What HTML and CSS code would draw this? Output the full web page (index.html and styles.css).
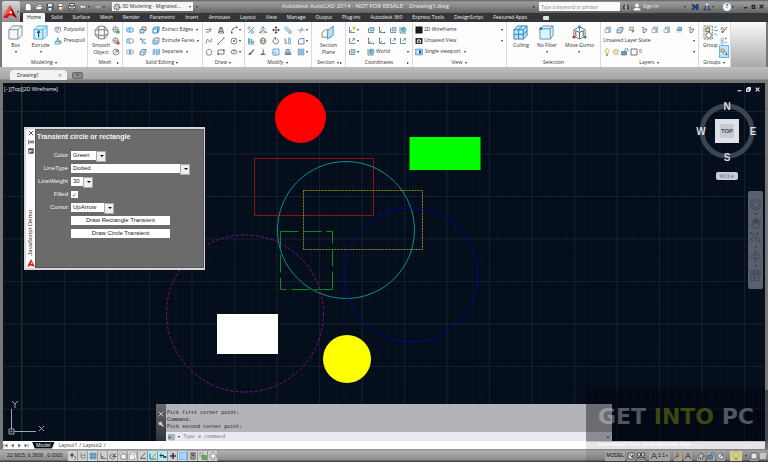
FILE: index.html
```html
<!DOCTYPE html>
<html lang="en">
<head>
  <meta charset="UTF-8"/>
  <meta name="viewport" content="width=device-width,initial-scale=1.0"/>
  <title>Autodesk AutoCAD 2014 - Drawing1.dwg</title>
  <link rel="stylesheet" href="styles.css">
</head>
<body>

<!-- Icon set -->
<svg class="icon-set" aria-hidden="true">
  <symbol id="i-box" viewBox="0 0 16 16"><path d="M1 5 5 1h10v10l-4 4H1z" fill="#f4f8fb" stroke="#7b8896"/><path d="M1 5h9.500v10M10.500 5 15 1" fill="none" stroke="#7b8896"/></symbol>
  <symbol id="i-extrude" viewBox="0 0 16 16"><path d="M1 5 5 1h10v10l-4 4H1z" fill="#c9efff" stroke="#4aa6dc"/><path d="M1 5h9.500v10M10.500 5 15 1" fill="none" stroke="#4aa6dc"/><path d="M6 13V7M4.500 8.500 6 6l1.500 2.500" stroke="#222" fill="none"/></symbol>
  <symbol id="i-polysolid" viewBox="0 0 16 16"><path d="M2 3h4v7l3 3 4-3V3h-4v5M2 3v6l5 5M6 3 9 1" fill="none" stroke="#6e7f8c" stroke-width="1.500"/></symbol>
  <symbol id="i-presspull" viewBox="0 0 16 16"><path d="M2 9h10v5H2zM5 9l2-6 3 6" fill="#d9f1fd" stroke="#2f8ec8" stroke-width="1.500"/><path d="M8 1v4M11 6l3 3v4" stroke="#555" fill="none" stroke-width="1.500"/></symbol>
  <symbol id="i-smooth" viewBox="0 0 16 16"><circle cx="8" cy="8" r="7" fill="#f6f6f6" stroke="#777"/><path d="M5 5h6v6H5zM1 6l4-1V1.500M11 1.500V5l4 1M1 10l4 1v4M15 10l-4 1v4" fill="none" stroke="#777"/></symbol>
  <symbol id="i-meshadd" viewBox="0 0 16 16"><circle cx="7" cy="7" r="5.500" fill="#eee" stroke="#777" stroke-width="1.500"/><path d="M2 7h11M7 2v11" stroke="#777"/><circle cx="12" cy="12" r="3.500" fill="#35b547"/></symbol>
  <symbol id="i-meshdel" viewBox="0 0 16 16"><circle cx="7" cy="7" r="5.500" fill="#eee" stroke="#777" stroke-width="1.500"/><path d="M2 7h11M7 2v11" stroke="#777"/><circle cx="12" cy="12" r="3.500" fill="#d5483f"/></symbol>
  <symbol id="i-refine" viewBox="0 0 16 16"><circle cx="8" cy="8" r="6" fill="#fff" stroke="#666" stroke-width="1.500"/><path d="M5 11l5-5M7 5h4v4" fill="none" stroke="#666" stroke-width="1.500"/></symbol>
  <symbol id="i-union" viewBox="0 0 16 16"><circle cx="5.500" cy="8" r="4.500" fill="#c6ecff" stroke="#2a8fce" stroke-width="1.500"/><circle cx="10.500" cy="8" r="4.500" fill="#c6ecff" fill-opacity=".7" stroke="#2a8fce" stroke-width="1.500"/></symbol>
  <symbol id="i-subtract" viewBox="0 0 16 16"><circle cx="5.500" cy="8" r="4.500" fill="#c6ecff" stroke="#2a8fce" stroke-width="1.500"/><circle cx="10.500" cy="8" r="4.500" fill="#fff" stroke="#8a7f90" stroke-width="1.500"/></symbol>
  <symbol id="i-intersect" viewBox="0 0 16 16"><circle cx="5.500" cy="8" r="4.500" fill="none" stroke="#7c8894" stroke-width="1.500"/><circle cx="10.500" cy="8" r="4.500" fill="none" stroke="#7c8894" stroke-width="1.500"/><ellipse cx="8" cy="8" rx="2" ry="3.500" fill="#4eb4ee"/></symbol>
  <symbol id="i-cubes" viewBox="0 0 16 16"><path d="M6 2h8v7H6z" fill="#e8e8e8" stroke="#555" stroke-width="1.500"/><path d="M2 7h8v7H2z" fill="#bfe5fa" stroke="#4b6a86" stroke-width="1.500"/></symbol>
  <symbol id="i-slice" viewBox="0 0 16 16"><path d="M2 3l5 3-1 5 8 3M7 6l6-1" fill="none" stroke="#666" stroke-width="1.500"/><path d="M8 8l5 2-2 4-5-2z" fill="#7ccbf3"/><circle cx="4" cy="4" r="2" fill="#c98a6d"/></symbol>
  <symbol id="i-solid" viewBox="0 0 16 16"><path d="M2 8l4-5h8v5l-4 6H2z" fill="#cfeafa" stroke="#5a6c7c" stroke-width="1.500"/><path d="M2 8h8v6M10 8l4-5" fill="none" stroke="#5a6c7c"/></symbol>
  <symbol id="i-edges" viewBox="0 0 16 16"><path d="M2 6l3-4h9v8l-3 4H2z" fill="#fff" stroke="#1c86cf" stroke-width="2"/><path d="M2 6h9v8M11 6l3-4" fill="none" stroke="#1c86cf" stroke-width="2"/></symbol>
  <symbol id="i-faces" viewBox="0 0 16 16"><path d="M2 6l3-4h9v8l-3 4H2z" fill="#fff" stroke="#566" stroke-width="1.500"/><path d="M4 6h7v6H4z" fill="#a8e0fb" stroke="#2890cc"/></symbol>
  <symbol id="i-separate" viewBox="0 0 16 16"><path d="M2 4l3-2v10l-3 2zM8 4l2-2v10l-2 2zM12 4l3-2v10l-3 2z" fill="#a9dcf7" stroke="#2a86c6"/></symbol>
  <symbol id="i-polyline" viewBox="0 0 16 16"><path d="M2 12h6M1 7h8a3 3 0 0 1 0 5M9 4l4 3-4 3" fill="none" stroke="#555" stroke-width="1.500"/></symbol>
  <symbol id="i-spiral" viewBox="0 0 16 16"><path d="M2 14h12M4 11h8M5 8h6M6 5h4M3 14 6 3h4l3 11" fill="none" stroke="#555" stroke-width="1.500"/></symbol>
  <symbol id="i-arc" viewBox="0 0 16 16"><path d="M3 13C3 7 7 3 13 3" fill="none" stroke="#555" stroke-width="1.500"/><path d="M2 12h3v3H2zM12 1h3v3h-3zM5 5h2v2H5z" fill="#555"/></symbol>
  <symbol id="i-spline" viewBox="0 0 16 16"><path d="M2 13C4 3 6 3 8 8s4 2 6-5" fill="none" stroke="#555" stroke-width="1.500"/></symbol>
  <symbol id="i-line" viewBox="0 0 16 16"><path d="M2 14 14 2" stroke="#555" stroke-width="1.500"/><path d="M1 12h3v3H1zM12 1h3v3h-3z" fill="#777"/></symbol>
  <symbol id="i-circle" viewBox="0 0 16 16"><circle cx="8" cy="8" r="6" fill="none" stroke="#666" stroke-width="1.500"/><path d="M8 8l4-4M7 7h2v2H7z" stroke="#555"/></symbol>
  <symbol id="i-polygon" viewBox="0 0 16 16"><path d="M8 2l6 5-2.500 7h-7L2 7z" fill="none" stroke="#666" stroke-width="1.500"/></symbol>
  <symbol id="i-rect" viewBox="0 0 16 16"><path d="M2 4h12v8H2z" fill="none" stroke="#555" stroke-width="1.500"/><path d="M1 11h3v3H1zM12 3h3v3h-3z" fill="#555"/></symbol>
  <symbol id="i-ellipse" viewBox="0 0 16 16"><ellipse cx="8" cy="8" rx="6" ry="4" fill="none" stroke="#555" stroke-width="1.500"/><path d="M7 7h2v2H7zM7 3h2v2H7z" fill="#444"/></symbol>
  <symbol id="i-match" viewBox="0 0 16 16"><circle cx="4" cy="4" r="2.500" fill="#b8e4f9" stroke="#3b88b6"/><circle cx="11" cy="12" r="3" fill="#b8e4f9" stroke="#3b88b6"/><path d="M14 2 3 14" stroke="#555" stroke-width="1.500"/></symbol>
  <symbol id="i-align" viewBox="0 0 16 16"><path d="M3 2v12h11" fill="none" stroke="#2f86c2" stroke-width="1.500"/><path d="M5 4h4v7H5zM9 8h5v4H9z" fill="#a9dbf5" stroke="#4b7ea0"/></symbol>
  <symbol id="i-erase" viewBox="0 0 16 16"><path d="M13 2 7 9l-2 4 4-2 6-7z" fill="#b5673c"/><path d="M6 9l3 3-7 2z" fill="#333"/></symbol>
  <symbol id="i-gizmo" viewBox="0 0 16 16"><circle cx="8" cy="9" r="5.500" fill="none" stroke="#888"/><path d="M8 9V2" stroke="#2286c8" stroke-width="1.500"/><path d="M8 9l-6 4" stroke="#cc3b2b" stroke-width="1.500"/><path d="M8 9l6 4" stroke="#26a043" stroke-width="1.500"/><circle cx="8" cy="2" r="1.500" fill="#2286c8"/><circle cx="2" cy="13" r="1.500" fill="#cc3b2b"/><circle cx="14" cy="13" r="1.500" fill="#26a043"/></symbol>
  <symbol id="i-cubegizmo" viewBox="0 0 16 16"><path d="M8 2l6 3v7l-6 3-6-3V5z" fill="#fff" stroke="#666"/><path d="M4 6l4 2 4-2M8 8v6M4 6v5M12 6v5" fill="none" stroke="#555"/><circle cx="8" cy="2" r="1.500" fill="#2286c8"/><circle cx="2" cy="13" r="1.500" fill="#cc3b2b"/><circle cx="14" cy="13" r="1.500" fill="#26a043"/><path d="M8 2v5" stroke="#2286c8"/><path d="M2 13l3-2" stroke="#cc3b2b"/><path d="M14 13l-3-2" stroke="#26a043"/></symbol>
  <symbol id="i-rotate3d" viewBox="0 0 16 16"><circle cx="8" cy="8" r="6" fill="none" stroke="#d25a4c" stroke-width="1.500"/><ellipse cx="8" cy="8" rx="3" ry="6" fill="none" stroke="#2b9b48" stroke-width="1.500"/><path d="M2 8h12" stroke="#2a84c4" stroke-width="1.500"/></symbol>
  <symbol id="i-scale3d" viewBox="0 0 16 16"><path d="M8 9V3l3 6z" fill="#3a98d2"/><path d="M8 9 2 14h6z" fill="#cc4536"/><path d="M8 9l6 5H8z" fill="#2da34a"/><path d="M8 1v8" stroke="#444"/></symbol>
  <symbol id="i-move" viewBox="0 0 16 16"><path d="M8 2v12M2 8h12" stroke="#444" stroke-width="1.500"/><path d="M8 0l3 4H5zM8 16l3-4H5zM0 8l4-3v6zM16 8l-4-3v6z" fill="#444"/></symbol>
  <symbol id="i-rotate" viewBox="0 0 16 16"><path d="M5 3.500a5.500 5.500 0 1 0 5 0" fill="none" stroke="#555" stroke-width="1.500"/><path d="M4 1h5L7 6z" fill="#555"/></symbol>
  <symbol id="i-scale" viewBox="0 0 16 16"><path d="M2 2h12v12H2z" fill="#d7f0fc" stroke="#3994cb" stroke-width="1.500"/><path d="M2 9h5v5H2z" fill="#fff" stroke="#566"/></symbol>
  <symbol id="i-copy" viewBox="0 0 16 16"><circle cx="5" cy="5" r="3.500" fill="#c9ebfb" stroke="#3b8cbc"/><circle cx="9" cy="9" r="3" fill="#fff" stroke="#3b8cbc"/><circle cx="12" cy="12" r="3" fill="#c9ebfb" stroke="#666"/></symbol>
  <symbol id="i-mirror" viewBox="0 0 16 16"><path d="M2 13V3l4 10z" fill="#fff" stroke="#555"/><path d="M9 2h4v12H9z" fill="#b5e3fa" stroke="#318dc7"/></symbol>
  <symbol id="i-stretch" viewBox="0 0 16 16"><path d="M2 13 5 3h5l4 10z" fill="#a6daf6" stroke="#52677a" stroke-width="1.500"/><path d="M5 9h6v4H5z" fill="#5e7d94"/></symbol>
  <symbol id="i-trim" viewBox="0 0 16 16"><path d="M1 8h6M10 8h5" stroke="#2a8ccd" stroke-width="1.500"/><path d="M7 13 10 3" stroke="#555" stroke-width="1.500"/></symbol>
  <symbol id="i-fillet" viewBox="0 0 16 16"><path d="M3 14V8c0-3 2-5 5-5h6v11z" fill="#f0f9fe" stroke="#58708a" stroke-width="1.500"/></symbol>
  <symbol id="i-array" viewBox="0 0 16 16"><path d="M2 2h5v5H2zM9 2h5v5H9zM2 9h5v5H2zM9 9h5v5H9z" fill="#9bd5f5" stroke="#3f7da8"/></symbol>
  <symbol id="i-section" viewBox="0 0 16 16"><path d="M1 8l4-3h8l-3 3v5H1z" fill="#f5f5f5" stroke="#888"/><path d="M7 6l6-5v10l-6 4z" fill="#b4e2f9" stroke="#5b8eb0"/></symbol>
  <symbol id="i-ucs" viewBox="0 0 16 16"><path d="M3 2v11h11M3 13l5-5" fill="none" stroke="#56697a" stroke-width="1.500"/><path d="M1 4l2-3 2 3zM12 11l3 2-3 2z" fill="#56697a"/></symbol>
  <symbol id="i-ucsview" viewBox="0 0 16 16"><path d="M3 4v9h11" fill="none" stroke="#56697a" stroke-width="1.500"/><path d="M6 3h8v7H6z" fill="#9fd6f2" stroke="#4b6478"/></symbol>
  <symbol id="i-ucsstar" viewBox="0 0 16 16"><path d="M3 2v11h11M3 13l5-5" fill="none" stroke="#56697a" stroke-width="1.500"/><circle cx="12" cy="4" r="3" fill="#f2b53c"/></symbol>
  <symbol id="i-ucsblue" viewBox="0 0 16 16"><path d="M3 2v11h11" fill="none" stroke="#56697a" stroke-width="1.500"/><path d="M7 9l6-6M9 3h4v4" fill="none" stroke="#2b8bd0" stroke-width="1.500"/></symbol>
  <symbol id="i-world" viewBox="0 0 16 16"><path d="M2 2v12h12" fill="none" stroke="#56697a" stroke-width="1.500"/><circle cx="9" cy="7" r="5" fill="#7cc9ec" stroke="#3c6f8f"/><path d="M7 4l3 1-1 4-3-1z" fill="#3fa556"/></symbol>
  <symbol id="i-visual" viewBox="0 0 16 16"><path d="M1 1h14v14H1z" fill="#111"/><path d="M5 6l3-2 3 2v4l-3 2-3-2z" fill="none" stroke="#444"/></symbol>
  <symbol id="i-camera" viewBox="0 0 16 16"><path d="M1 2h14v12H1z" fill="#333"/><path d="M4 6h8v6H4zM6 4h3v2H6z" fill="#ccc"/><circle cx="8" cy="9" r="2" fill="#333"/></symbol>
  <symbol id="i-viewport" viewBox="0 0 16 16"><path d="M1 2h14v12H1z" fill="#8fd3f7" stroke="#3b83b4"/><path d="M8 5h4v6H8z" fill="#16588a"/><path d="M4 6h4v4H4z" fill="#fff"/></symbol>
  <symbol id="i-culling" viewBox="0 0 16 16"><path d="M1 5l4-4h10v10l-4 4H1z" fill="#b9e4fa" stroke="#2c80b8"/><path d="M1 5h10v10M11 5l4-4M1 10h10l4-4M6 5v10M6 5l4-4" fill="none" stroke="#2c80b8"/></symbol>
  <symbol id="i-nofilter" viewBox="0 0 16 16"><path d="M1 4l3-3h11v10l-3 4H1z" fill="#d9f2fd" stroke="#7b8896"/><path d="M1 4h11v11M12 4l3-3" fill="none" stroke="#2c9cdb"/><circle cx="2" cy="4" r="1.500" fill="#1b77c0"/></symbol>
  <symbol id="i-layer" viewBox="0 0 16 16"><path d="M5 2h8v6H5z" fill="#ccd8e0" stroke="#60717e"/><path d="M2 6h8v7H2z" fill="#fff" stroke="#60717e"/><circle cx="11" cy="11" r="3" fill="#77bfe6"/></symbol>
  <symbol id="i-layerfire" viewBox="0 0 16 16"><path d="M3 2h8v7H3z" fill="#ccd8e0" stroke="#60717e"/><path d="M6 8h7l-3 6z" fill="#d76a32"/></symbol>
  <symbol id="i-layercut" viewBox="0 0 16 16"><path d="M3 3h5M6 6h8l-4 7H6z" fill="#e8edf0" stroke="#666" stroke-width="1.500"/></symbol>
  <symbol id="i-layerblue" viewBox="0 0 16 16"><path d="M2 8h10M6 3h7v6H6z" fill="#9cd2f2" stroke="#3f7fa9" stroke-width="1.500"/><path d="M2 12h11" stroke="#7aa"/></symbol>
  <symbol id="i-bulb" viewBox="0 0 16 16"><path d="M8 1a5 5 0 0 0-2 9v2h4v-2a5 5 0 0 0-2-9z" fill="#fff2a0" stroke="#a89a3c"/><path d="M6 14h4" stroke="#555" stroke-width="2"/></symbol>
  <symbol id="i-sun" viewBox="0 0 16 16"><path d="M8 0v16M0 8h16M2 2l12 12M14 2 2 14" stroke="#b0a15a"/><circle cx="8" cy="8" r="4" fill="#fff6b8" stroke="#8d834a"/></symbol>
  <symbol id="i-unlock" viewBox="0 0 16 16"><path d="M8 8V4a3 3 0 0 1 6 0v3" fill="none" stroke="#56697a" stroke-width="1.500"/><path d="M1 7h10v7H1z" fill="#5a9fcc" stroke="#34536c"/></symbol>
  <symbol id="i-swatch" viewBox="0 0 16 16"><path d="M2 2h12v12H2z" fill="#fff" stroke="#444" stroke-width="1.500"/></symbol>
  <symbol id="i-group" viewBox="0 0 16 16"><path d="M1 1h9v14H1z" fill="#f4f7dd" stroke="#777" stroke-dasharray="2 1"/><path d="M3 3h4v4H3z" fill="#d8df8f" stroke="#666"/><circle cx="6" cy="11" r="3" fill="#fff" stroke="#666"/><path d="M12 3l3-2M12 6h4M12 9l3 2" stroke="#3ba0dd"/></symbol>
  <symbol id="i-ungroup" viewBox="0 0 16 16"><path d="M2 3h5v5H2z" fill="#e0e59b" stroke="#777"/><path d="M14 2 6 12" stroke="#a23c30" stroke-width="2"/><path d="M3 10h4v4H3z" fill="#777"/></symbol>
  <symbol id="i-groupedit" viewBox="0 0 16 16"><path d="M2 2h5v5H2zM2 9h5v5H2z" fill="#e2edf5" stroke="#7896ab"/><path d="M10 3h4M12 1v4M10 11h4" stroke="#4b8dbb" stroke-width="1.500"/></symbol>
  <symbol id="i-groupsel" viewBox="0 0 16 16"><path d="M2 2h6v6H2z" fill="#dfe39a" stroke="#555"/><circle cx="10" cy="10" r="3" fill="#fff" stroke="#555"/><path d="M11 8l4 5-2 2z" fill="#444"/></symbol>
  <symbol id="i-new" viewBox="0 0 16 16"><path d="M3 1h7l4 4v10H3z" fill="#fff" stroke="#555"/></symbol>
  <symbol id="i-open" viewBox="0 0 16 16"><path d="M1 13V5h4l1-2h8v3l-3 7z" fill="#e6e6e6" stroke="#444"/><path d="M4 7h12l-4 6H1z" fill="#fff" stroke="#444"/></symbol>
  <symbol id="i-save" viewBox="0 0 16 16"><path d="M1 1h14v14H1z" fill="#46536b"/><path d="M4 2h8v5H4zM5 10h6v5H5z" fill="#f2f2f2"/></symbol>
  <symbol id="i-saveas" viewBox="0 0 16 16"><path d="M1 1h12v12H1z" fill="#5a6678"/><path d="M3 2h8v4H3zM4 8h6v5H4z" fill="#f2f2f2"/><path d="M15 5 8 15" stroke="#d59a3f" stroke-width="3"/></symbol>
  <symbol id="i-print" viewBox="0 0 16 16"><path d="M4 1h8v5H4zM1 6h14v6H1zM4 10h8v5H4z" fill="#f5f5f5" stroke="#333" stroke-width="1.500"/></symbol>
  <symbol id="i-undo" viewBox="0 0 16 16"><path d="M1 7l6-5v3h7v5H7v3z" fill="#ddd" stroke="#555"/></symbol>
  <symbol id="i-redo" viewBox="0 0 16 16"><path d="M15 7 9 2v3H2v5h7v3z" fill="#aaa" stroke="#777"/></symbol>
  <symbol id="i-gear" viewBox="0 0 16 16"><circle cx="8" cy="8" r="5.500" fill="#eee" stroke="#555" stroke-width="3" stroke-dasharray="2.500 1.500"/><circle cx="8" cy="8" r="2.500" fill="#fff" stroke="#555"/></symbol>
  <symbol id="i-find" viewBox="0 0 16 16"><path d="M1 14V6l3-4h3v12zM15 14V6l-3-4H9v12zM6 6h4v4H6z" fill="#3c3c3c" stroke="#ccc"/></symbol>
  <symbol id="i-user" viewBox="0 0 16 16"><circle cx="8" cy="5" r="4" fill="#f2f2f2"/><path d="M1 15v-3l4-2h6l4 2v3z" fill="#f2f2f2"/></symbol>
  <symbol id="i-exchange" viewBox="0 0 16 16"><path d="M1 2h4l3 4 3-4h4v12h-4L8 10l-3 4H1l3-6z" fill="#263b7e"/></symbol>
  <symbol id="i-a360" viewBox="0 0 16 16"><path d="M8 2l6 11H2z" fill="none" stroke="#2f3e70" stroke-width="2"/><circle cx="8" cy="3" r="2.500" fill="#dfe7f5"/><circle cx="3" cy="13" r="2.500" fill="#394b84"/><circle cx="13" cy="13" r="2.500" fill="#394b84"/></symbol>
  <symbol id="i-wrench" viewBox="0 0 16 16"><path d="M2 2l2 3 3-1V2a4 4 0 0 1 3 6l5 5-2 2-5-5a4 4 0 0 1-6-4z" fill="#ddd"/></symbol>
  <symbol id="i-wheel" viewBox="0 0 16 16"><rect x="1" y="1" width="14" height="14" rx="5"/><circle cx="8" cy="8" r="4.500"/></symbol>
  <symbol id="i-hand" viewBox="0 0 16 16"><path d="M5 15 1 9l1-1 3 2V3h2v5V1h2v7V2h2v7l1-5h2v7l-3 4z"/></symbol>
  <symbol id="i-zoom" viewBox="0 0 16 16"><path d="M1 1l9 9M12 1 1 12M1 4V1h3M9 1h3v3M1 9v3h3"/><circle cx="11" cy="11" r="3"/><path d="M13 13l3 3"/></symbol>
  <symbol id="i-orbit" viewBox="0 0 16 16"><path d="M8 1v14M6 3l2-2 2 2M6 13l2 2 2-2"/><ellipse cx="8" cy="8" rx="7" ry="3"/></symbol>
  <symbol id="i-motion" viewBox="0 0 16 16"><path d="M1 1h4v4H1zM6 1h4v4H6zM11 1h4v4h-4zM1 7h12v8H1zM5 9l4 2-4 2z"/></symbol>
  <symbol id="i-infer" viewBox="0 0 16 16"><path d="M6 2v9M2 6h8" stroke="#333" stroke-width="2"/><path d="M10 8l4 3-3 4" stroke="#3577b8" fill="none" stroke-width="2"/></symbol>
  <symbol id="i-lwt" viewBox="0 0 16 16"><path d="M8 2v12M2 8h12" stroke="#333" stroke-width="3"/></symbol>
  <symbol id="i-snap" viewBox="0 0 16 16"><path d="M4 2v10h8V2M4 7h8" fill="none" stroke="#777" stroke-dasharray="2 1" stroke-width="2"/></symbol>
  <symbol id="i-grid" viewBox="0 0 16 16"><path d="M2 2h12v12H2zM2 5h12M2 8h12M2 11h12M5 2v12M8 2v12M11 2v12" fill="none" stroke="#556"/></symbol>
  <symbol id="i-ortho" viewBox="0 0 16 16"><path d="M4 2v11h11M4 9h4v4" fill="none" stroke="#555" stroke-width="1.500"/></symbol>
  <symbol id="i-polar" viewBox="0 0 16 16"><circle cx="7" cy="9" r="5" fill="none" stroke="#555" stroke-width="1.500"/><path d="M7 9l7-6M7 9h8" stroke="#444" stroke-width="1.500"/></symbol>
  <symbol id="i-osnap" viewBox="0 0 16 16"><path d="M4 4h10v10H4z" fill="#fff" stroke="#666" stroke-width="1.500"/><path d="M1 1h5v5H1z" fill="#f5d9c0" stroke="#d0874f"/></symbol>
  <symbol id="i-angle" viewBox="0 0 16 16"><path d="M12 2 3 13h11" fill="none" stroke="#444" stroke-width="1.500"/></symbol>
  <symbol id="i-ducs" viewBox="0 0 16 16"><path d="M2 3v11h12" stroke="#276a9e" fill="none" stroke-width="2"/><path d="M6 11l8-8" stroke="#dda542" stroke-width="3"/></symbol>
  <symbol id="i-dyn" viewBox="0 0 16 16"><path d="M4 3v8M1 7h9" stroke="#333" stroke-width="2"/><path d="M8 8h7v4H8z" fill="#2c5e70"/></symbol>
  <symbol id="i-fill" viewBox="0 0 16 16"><path d="M1 1h14v14H1z" fill="#a8d5f8" stroke="#5299d0"/></symbol>
  <symbol id="i-props" viewBox="0 0 16 16"><path d="M4 4h8v10H4zM3 2h10M6 7h4M6 10h4" fill="#ddd" stroke="#444" stroke-width="2"/></symbol>
  <symbol id="i-cycle" viewBox="0 0 16 16"><path d="M2 2h6v6H2z" fill="#ddd" stroke="#555"/><path d="M6 7h9v8H6z" fill="#55b447" stroke="#2f7a27"/></symbol>
  <symbol id="i-plus" viewBox="0 0 16 16"><path d="M6 1h4v5h5v4h-5v5H6v-5H1V6h5z" fill="#fff" stroke="#555"/></symbol>
  <symbol id="i-sheet" viewBox="0 0 16 16"><path d="M2 2h12v12H2z" fill="#f4f4f4" stroke="#333" stroke-width="1.500"/><path d="M5 5l6 6V6" stroke="#444" fill="none" stroke-width="2"/></symbol>
  <symbol id="i-sheets" viewBox="0 0 16 16"><path d="M1 2h6v6H1zM9 2h6v6H9zM1 11h14v3H1z" fill="#f4f4f4" stroke="#333" stroke-width="1.500"/></symbol>
  <symbol id="i-anno" viewBox="0 0 16 16"><path d="M8 2 2 14M8 2l6 12M5 9h6" stroke="#333" fill="#ddd" stroke-width="1.500"/></symbol>
  <symbol id="i-annostar" viewBox="0 0 16 16"><path d="M7 2 2 14M7 2l5 12M4 9h6" stroke="#555" fill="none" stroke-width="1.500"/><circle cx="12" cy="11" r="3.500" fill="#e9ad40"/></symbol>
</svg>

<div class="app">

<header class="top">
  <button class="app-menu" aria-label="Application menu">
    <svg class="logo" viewBox="0 0 16 16"><path d="M8 0 0 14l5 1 2-3h4l5 3z" fill="#d5150f"/><path d="M8 0 0 14l7-5 2-5z" fill="#f4574a"/><path d="M7 9l2-3 2 4z" fill="#fff"/><path d="M11 12l5 3L9 2z" fill="#8d0906"/></svg>
    <i class="caret"></i>
  </button>
  <div class="title-bar">
    <div class="quick">
      <button aria-label="New"><svg><use href="#i-new"/></svg></button>
      <button aria-label="Open"><svg><use href="#i-open"/></svg></button>
      <button aria-label="Save"><svg><use href="#i-save"/></svg></button>
      <button aria-label="Save As"><svg><use href="#i-saveas"/></svg></button>
      <button aria-label="Plot"><svg><use href="#i-print"/></svg></button>
      <button aria-label="Undo"><svg><use href="#i-undo"/></svg><i class="caret"></i></button>
      <button aria-label="Redo"><svg><use href="#i-redo"/></svg><i class="caret"></i></button>
    </div>
    <div class="workspace">
      <svg><use href="#i-gear"/></svg>
      <select aria-label="Workspace"><option>3D Modeling - Migrated...</option></select>
      <i class="caret"></i>
    </div>
    <i class="caret more"></i>
    <div class="app-title"><span>Autodesk AutoCAD 2014 - NOT FOR RESALE</span><span>Drawing1.dwg</span></div>
    <i class="caret right"></i>
    <input class="search" type="text" aria-label="Search" placeholder="Type a keyword or phrase">
    <div class="account">
      <button aria-label="Search help"><svg><use href="#i-find"/></svg></button>
      <button class="sign-in"><svg><use href="#i-user"/></svg>Sign In</button>
    </div>
    <div class="services">
      <i class="caret"></i>
      <button aria-label="Exchange"><svg><use href="#i-exchange"/></svg></button>
      <button aria-label="Autodesk 360"><svg><use href="#i-a360"/></svg><i class="caret"></i></button>
    </div>
    <div class="help"><button class="help-button">?</button><i class="caret"></i></div>
    <div class="window-buttons">
      <button aria-label="Minimize"><svg viewBox="0 0 8 8"><path d="M1 6h6"/></svg></button>
      <button aria-label="Restore"><svg viewBox="0 0 8 8"><path d="M2 2h4v5H2z"/></svg></button>
      <button aria-label="Close"><svg viewBox="0 0 8 8"><path d="M1 1l6 6M7 1 1 7"/></svg></button>
    </div>
  </div>
  <nav class="ribbon-tabs">
    <a href="#home" class="active">Home</a>
    <a href="#solid">Solid</a>
    <a href="#surface">Surface</a>
    <a href="#mesh">Mesh</a>
    <a href="#render">Render</a>
    <a href="#parametric">Parametric</a>
    <a href="#insert">Insert</a>
    <a href="#annotate">Annotate</a>
    <a href="#layout">Layout</a>
    <a href="#view">View</a>
    <a href="#manage">Manage</a>
    <a href="#output">Output</a>
    <a href="#plugins">Plug-ins</a>
    <a href="#a360">Autodesk 360</a>
    <a href="#express">Express Tools</a>
    <a href="#script">DesignScript</a>
    <a href="#apps">Featured Apps</a>
    <button class="ribbon-toggle" aria-label="Minimize ribbon"><i></i></button>
  </nav>
</header>

<section class="ribbon" id="home">
  <div class="panel">
    <div class="tools">
      <button class="big"><svg><use href="#i-box"/></svg>Box<i class="caret"></i></button>
      <button class="big"><svg><use href="#i-extrude"/></svg>Extrude<i class="caret"></i></button>
      <div class="stack">
        <button><svg><use href="#i-polysolid"/></svg>Polysolid</button>
        <button><svg><use href="#i-presspull"/></svg>Presspull</button>
      </div>
    </div>
    <div class="panel-name">Modeling <i class="caret"></i></div>
  </div>
  <div class="panel">
    <div class="tools">
      <button class="big"><svg><use href="#i-smooth"/></svg>Smooth<br>Object</button>
      <div class="stack">
        <button aria-label="Smooth more"><svg><use href="#i-meshadd"/></svg></button>
        <button aria-label="Smooth less"><svg><use href="#i-meshdel"/></svg></button>
        <button aria-label="Refine mesh"><svg><use href="#i-refine"/></svg></button>
      </div>
    </div>
    <div class="panel-name">Mesh <i class="caret right launch"></i></div>
  </div>
  <div class="panel">
    <div class="tools">
      <div class="icons cols-2">
        <button aria-label="Union"><svg><use href="#i-union"/></svg></button>
        <button aria-label="Interfere"><svg><use href="#i-cubes"/></svg></button>
        <button aria-label="Subtract"><svg><use href="#i-subtract"/></svg></button>
        <button aria-label="Slice"><svg><use href="#i-slice"/></svg></button>
        <button aria-label="Intersect"><svg><use href="#i-intersect"/></svg></button>
        <button aria-label="Thicken"><svg><use href="#i-solid"/></svg></button>
      </div>
      <div class="stack">
        <button><svg><use href="#i-edges"/></svg>Extract Edges<i class="caret"></i></button>
        <button><svg><use href="#i-faces"/></svg>Extrude Faces<i class="caret"></i></button>
        <button><svg><use href="#i-separate"/></svg>Separate<i class="caret"></i></button>
      </div>
    </div>
    <div class="panel-name">Solid Editing <i class="caret"></i></div>
  </div>
  <div class="panel">
    <div class="tools">
      <div class="icons cols-3">
        <button aria-label="Polyline"><svg><use href="#i-polyline"/></svg></button>
        <button aria-label="Helix"><svg><use href="#i-spiral"/></svg></button>
        <button aria-label="Arc"><svg><use href="#i-arc"/></svg><i class="caret"></i></button>
        <button aria-label="Spline"><svg><use href="#i-spline"/></svg></button>
        <button aria-label="Line"><svg><use href="#i-line"/></svg></button>
        <button aria-label="Circle"><svg><use href="#i-circle"/></svg><i class="caret"></i></button>
        <button aria-label="Polygon"><svg><use href="#i-polygon"/></svg></button>
        <button aria-label="Rectangle"><svg><use href="#i-rect"/></svg></button>
        <button aria-label="Ellipse"><svg><use href="#i-ellipse"/></svg><i class="caret"></i></button>
      </div>
    </div>
    <div class="panel-name">Draw <i class="caret"></i></div>
  </div>
  <div class="panel">
    <div class="tools">
      <div class="icons cols-5">
        <button aria-label="3D align"><svg><use href="#i-match"/></svg></button>
        <button aria-label="3D move"><svg><use href="#i-gizmo"/></svg></button>
        <button aria-label="Move"><svg><use href="#i-move"/></svg></button>
        <button aria-label="Copy"><svg><use href="#i-copy"/></svg></button>
        <button aria-label="Trim"><svg><use href="#i-trim"/></svg><i class="caret"></i></button>
        <button aria-label="Align"><svg><use href="#i-align"/></svg></button>
        <button aria-label="3D rotate"><svg><use href="#i-rotate3d"/></svg></button>
        <button aria-label="Rotate"><svg><use href="#i-rotate"/></svg></button>
        <button aria-label="Mirror"><svg><use href="#i-mirror"/></svg></button>
        <button aria-label="Fillet"><svg><use href="#i-fillet"/></svg><i class="caret"></i></button>
        <button aria-label="Erase"><svg><use href="#i-erase"/></svg></button>
        <button aria-label="3D scale"><svg><use href="#i-scale3d"/></svg></button>
        <button aria-label="Scale"><svg><use href="#i-scale"/></svg></button>
        <button aria-label="Stretch"><svg><use href="#i-stretch"/></svg></button>
        <button aria-label="Array"><svg><use href="#i-array"/></svg><i class="caret"></i></button>
      </div>
    </div>
    <div class="panel-name">Modify <i class="caret"></i></div>
  </div>
  <div class="panel">
    <div class="tools">
      <button class="big"><svg><use href="#i-section"/></svg>Section<br>Plane</button>
    </div>
    <div class="panel-name">Section <i class="caret"></i><i class="caret right launch"></i></div>
  </div>
  <div class="panel">
    <div class="tools">
      <div class="icons cols-5 coords">
        <button aria-label="UCS origin"><svg><use href="#i-ucsstar"/></svg><i class="caret"></i></button>
        <button aria-label="UCS view"><svg><use href="#i-ucsview"/></svg></button>
        <button aria-label="UCS"><svg><use href="#i-ucs"/></svg></button>
        <button aria-label="Named UCS"><svg><use href="#i-ucsview"/></svg></button>
        <button aria-label="World"><svg><use href="#i-world"/></svg></button>
        <button aria-label="UCS X"><svg><use href="#i-ucsblue"/></svg><i class="caret"></i></button>
        <button aria-label="UCS previous"><svg><use href="#i-ucs"/></svg></button>
        <button aria-label="UCS face"><svg><use href="#i-ucs"/></svg></button>
        <button aria-label="UCS object"><svg><use href="#i-ucsblue"/></svg></button>
        <button aria-label="UCS 3 point"><svg><use href="#i-ucsblue"/></svg></button>
        <button aria-label="UCS Z"><svg><use href="#i-ucsview"/></svg><i class="caret"></i></button>
        <div class="drop"><svg><use href="#i-world"/></svg><select aria-label="UCS name"><option>World</option></select><i class="caret"></i></div>
      </div>
    </div>
    <div class="panel-name">Coordinates <i class="caret right launch"></i></div>
  </div>
  <div class="panel">
    <div class="stack wide">
      <div class="drop"><svg><use href="#i-visual"/></svg><select aria-label="Visual style"><option>2D Wireframe</option></select><i class="caret"></i></div>
      <div class="drop"><svg><use href="#i-camera"/></svg><select aria-label="Named view"><option>Unsaved View</option></select><i class="caret"></i></div>
      <button><svg><use href="#i-viewport"/></svg>Single viewport<i class="caret"></i></button>
    </div>
    <div class="panel-name">View <i class="caret"></i></div>
  </div>
  <div class="panel">
    <div class="tools">
      <button class="big"><svg><use href="#i-culling"/></svg>Culling</button>
      <button class="big"><svg><use href="#i-nofilter"/></svg>No Filter<i class="caret"></i></button>
      <button class="big"><svg><use href="#i-cubegizmo"/></svg>Move Gizmo<i class="caret"></i></button>
    </div>
    <div class="panel-name">Selection</div>
  </div>
  <div class="panel">
    <div class="stack wide">
      <div class="row">
        <button aria-label="Layer properties"><svg><use href="#i-layer"/></svg></button>
        <button aria-label="Layer off"><svg><use href="#i-solid"/></svg></button>
        <button aria-label="Layer freeze"><svg><use href="#i-layerfire"/></svg></button>
        <button aria-label="Layer isolate"><svg><use href="#i-layercut"/></svg></button>
        <button aria-label="Layer match"><svg><use href="#i-layer"/></svg></button>
        <button aria-label="Layer previous"><svg><use href="#i-layer"/></svg></button>
        <button aria-label="Layer walk"><svg><use href="#i-layerblue"/></svg></button>
        <button aria-label="Layer current"><svg><use href="#i-layercut"/></svg></button>
      </div>
      <div class="drop"><select aria-label="Layer state"><option>Unsaved Layer State</option></select><i class="caret"></i></div>
      <div class="drop"><svg><use href="#i-bulb"/></svg><svg><use href="#i-sun"/></svg><svg><use href="#i-unlock"/></svg><svg><use href="#i-swatch"/></svg><select aria-label="Layer"><option>0</option></select><i class="caret"></i></div>
    </div>
    <div class="panel-name">Layers <i class="caret"></i></div>
  </div>
  <div class="panel">
    <div class="tools">
      <button class="big"><svg><use href="#i-group"/></svg>Group</button>
      <div class="stack">
        <button aria-label="Ungroup"><svg><use href="#i-ungroup"/></svg></button>
        <button aria-label="Group edit"><svg><use href="#i-groupedit"/></svg></button>
        <button class="on" aria-label="Group selection"><svg><use href="#i-groupsel"/></svg></button>
      </div>
    </div>
    <div class="panel-name">Groups <i class="caret"></i></div>
  </div>
  <div class="filler"></div>
</section>

<div class="file-tabs">
  <a href="#drawing" class="file-tab">Drawing1 <span>×</span></a>
  <button class="new-tab" aria-label="New tab">+</button>
</div>

<main class="viewport" id="drawing">
  <svg class="drawing">
    <defs>
      <pattern id="minor" x="18.500" y="28" width="8.500" height="8.500" patternUnits="userSpaceOnUse"><path d="M0 0H8.500M0 0V8.500" stroke="#0b1625" fill="none"/></pattern>
      <pattern id="major" x="18.500" y="28" width="42.500" height="42.500" patternUnits="userSpaceOnUse"><path d="M0 .500H42.500M.500 0V42.500" stroke="#131e30" fill="none"/></pattern>
    </defs>
    <rect width="100%" height="100%" fill="#040e1b"/>
    <rect width="100%" height="100%" fill="url(#minor)"/>
    <rect width="100%" height="100%" fill="url(#major)"/>
    <path d="M18.500 0V358" stroke="#0a4020"/>
    <circle cx="297.500" cy="34.500" r="25.500" fill="#f00"/>
    <rect x="406.500" y="54" width="71" height="33" fill="#0f0"/>
    <g fill="none">
      <rect x="251.500" y="75.500" width="119" height="57" stroke="#8c1016"/>
      <circle cx="343" cy="147" r="68.500" stroke="#088f96"/>
      <rect x="300.500" y="107.500" width="119" height="59" stroke="#8a8a14" stroke-dasharray="2 1"/>
      <circle cx="408" cy="192" r="67" stroke="#05058c"/>
      <path d="M277.500 148.500h52v58M277.500 148.500v58h52" stroke="#0a8a12" stroke-dasharray="18 5"/>
      <circle cx="242" cy="230.500" r="78.500" stroke="#8a0a8c" stroke-dasharray="3 2"/>
    </g>
    <rect x="214" y="231" width="61" height="40" fill="#fff"/>
    <circle cx="344" cy="276" r="24" fill="#ff0"/>
  </svg>

  <div class="view-label">[−][Top][2D Wireframe]</div>
  <div class="window-buttons doc-buttons">
    <button aria-label="Minimize drawing"><svg viewBox="0 0 8 8"><path d="M1 6h6"/></svg></button>
    <button aria-label="Restore drawing"><svg viewBox="0 0 8 8"><path d="M1 3h4v4H1zM3 3V1h4v4H5"/></svg></button>
    <button aria-label="Close drawing"><svg viewBox="0 0 8 8"><path d="M1 1l6 6M7 1 1 7"/></svg></button>
  </div>

  <svg class="view-cube" viewBox="0 0 64 64">
    <circle cx="32" cy="32" r="25" fill="none" stroke="#3b4551" stroke-width="5"/>
    <rect x="20" y="20" width="24" height="24" fill="#dfe1e4"/>
    <rect x="25" y="25" width="14" height="14" fill="#c3cbd4"/>
    <text class="cube-face" x="32" y="34">TOP</text>
    <text x="32" y="11">N</text><text x="6" y="36">W</text><text x="58" y="36">E</text><text x="32" y="62">S</text>
  </svg>
  <button class="wcs">WCS ▾</button>

  <div class="nav-bar">
    <button aria-label="Steering wheel"><svg><use href="#i-wheel"/></svg><i class="caret"></i></button>
    <button aria-label="Pan"><svg><use href="#i-hand"/></svg></button>
    <button aria-label="Zoom"><svg><use href="#i-zoom"/></svg><i class="caret"></i></button>
    <button aria-label="Orbit"><svg><use href="#i-orbit"/></svg><i class="caret"></i></button>
    <button aria-label="ShowMotion"><svg><use href="#i-motion"/></svg></button>
  </div>

  <svg class="ucs-icon" viewBox="0 0 40 40"><path d="M6.500 29V9M9 31.500h22M4 29h5v5H4zM6 31h1v1H6zM7 1l3 3 3-3M10 4v4M34 26l5 5M39 26l-5 5"/></svg>

  <form class="palette">
    <div class="palette-bar">
      <button type="button" aria-label="Close palette"><svg viewBox="0 0 8 8"><path d="M1 1l6 6M7 1 1 7"/></svg></button>
      <button type="button" aria-label="Auto-hide"><svg viewBox="0 0 8 8"><path d="M1 1v6M2 4h5M5 2 3 4l2 2M7 2v4"/></svg></button>
      <button type="button" aria-label="Properties"><svg viewBox="0 0 8 8"><path d="M1 1h6v6H1zM1 2h6M3 4h4M3 6h4"/></svg></button>
      <span class="palette-name">JavaScript Demo</span>
      <svg class="logo" viewBox="0 0 16 16"><path d="M8 0 0 16l8-3 8 3z" fill="#e01b14"/><path d="M7 9l2-3 2 4z" fill="#fff"/></svg>
    </div>
    <div class="palette-body">
      <h1>Transient circle or rectangle</h1>
      <label for="color">Color</label>
      <span class="combo short"><select id="color"><option>Green</option></select></span>
      <label for="linetype">LineType</label>
      <span class="combo full"><select id="linetype"><option>Dotted</option></select></span>
      <label for="lineweight">LineWeight</label>
      <span class="combo tiny"><select id="lineweight"><option>30</option></select></span>
      <label for="filled">Filled</label>
      <input id="filled" type="checkbox" checked>
      <label for="cursor">Cursor</label>
      <span class="combo medium"><select id="cursor"><option>UpArrow</option></select></span>
      <button type="button">Draw Rectangle Transient</button>
      <button type="button">Draw Circle Transient</button>
    </div>
  </form>

  <div class="command">
    <div class="command-grip">
      <button aria-label="Close command line"><svg viewBox="0 0 8 8"><path d="M1 1l6 6M7 1 1 7"/></svg></button>
      <button aria-label="Customize"><svg><use href="#i-wrench"/></svg></button>
    </div>
    <div class="command-main">
      <div class="history">Pick first corner point:<br>Command:<br>Pick second corner point:</div>
      <div class="prompt">
        <span class="prompt-icon">&gt;_</span><i class="caret"></i>
        <input type="text" aria-label="Command" placeholder="Type a command">
        <i class="caret up"></i>
      </div>
    </div>
  </div>
</main>

<div class="layout-tabs">
  <button aria-label="First"><svg viewBox="0 0 8 8"><path d="M1 1h1v6H1zM7 1v6L3 4z"/></svg></button>
  <button aria-label="Previous"><svg viewBox="0 0 8 8"><path d="M6 1v6L2 4z"/></svg></button>
  <button aria-label="Next"><svg viewBox="0 0 8 8"><path d="M2 1v6l4-3z"/></svg></button>
  <button aria-label="Last"><svg viewBox="0 0 8 8"><path d="M6 1h1v6H6zM1 1v6l4-3z"/></svg></button>
  <a href="#model" class="active">Model</a>
  <a href="#layout1">Layout1</a><span>/</span>
  <a href="#layout2">Layout2</a><span>/</span>
</div>

<footer class="status-bar">
  <div class="position">22.6815, 6.3608 , 0.0000</div>
  <div class="toggles">
    <button aria-label="Infer"><svg><use href="#i-infer"/></svg></button>
    <button aria-label="Snap"><svg><use href="#i-snap"/></svg></button>
    <button class="on" aria-label="Grid"><svg><use href="#i-grid"/></svg></button>
    <button aria-label="Ortho"><svg><use href="#i-ortho"/></svg></button>
    <button aria-label="Polar"><svg><use href="#i-polar"/></svg></button>
    <button aria-label="Object snap"><svg><use href="#i-osnap"/></svg></button>
    <button aria-label="3D object snap"><svg><use href="#i-box"/></svg></button>
    <button aria-label="Tracking"><svg><use href="#i-angle"/></svg></button>
    <button class="on" aria-label="Dynamic UCS"><svg><use href="#i-ducs"/></svg></button>
    <button class="on" aria-label="Dynamic input"><svg><use href="#i-dyn"/></svg></button>
    <button aria-label="Lineweight"><svg><use href="#i-lwt"/></svg></button>
    <button class="on" aria-label="Transparency"><svg><use href="#i-fill"/></svg></button>
    <button aria-label="Quick properties"><svg><use href="#i-props"/></svg></button>
    <button aria-label="Selection cycling"><svg><use href="#i-cycle"/></svg></button>
    <button aria-label="Annotation monitor"><svg><use href="#i-plus"/></svg></button>
  </div>
  <div class="tray">
    <button class="model">MODEL</button>
    <button aria-label="Layouts"><svg><use href="#i-sheet"/></svg></button>
    <button aria-label="Drawings"><svg><use href="#i-sheets"/></svg></button>
    <button class="scale"><svg><use href="#i-anno"/></svg>1:1<i class="caret"></i></button>
    <button aria-label="Annotation visibility"><svg><use href="#i-annostar"/></svg></button>
    <button aria-label="Auto scale"><svg><use href="#i-anno"/></svg></button>
    <button class="gap" aria-label="Workspace"><svg><use href="#i-gear"/></svg></button>
    <button aria-label="Lock"><svg><use href="#i-unlock"/></svg></button>
    <button aria-label="Hardware"><svg><use href="#i-refine"/></svg></button>
    <button class="lamp" aria-label="Isolate"><svg><use href="#i-bulb"/></svg></button>
    <i class="caret"></i>
    <button aria-label="Clean screen"><svg><use href="#i-swatch"/></svg></button>
    <span class="grip"></span>
  </div>
</footer>

<div class="watermark">
  <div class="mark">GET <b>INTO</b> PC</div>
  <div class="tagline">Download Free Your Desired App</div>
</div>

</div>

</body>
</html>
```

FILE: styles.css
```css
* { box-sizing: border-box; }
body {
  margin: 0;
  background: #777;
  font: 5px/7px 'Open Sans', 'Noto Sans', sans-serif;
  color: #333;
}
button, input, select {
  font: inherit; color: inherit;
  background: none; border: none;
  margin: 0; padding: 0;
  appearance: none; outline: none;
}
button {
  display: flex; align-items: center; justify-content: center;
}
a { color: inherit; text-decoration: none; }
svg { width: 8px; height: 8px; flex: none; display: block; }
.icon-set { position: absolute; width: 0; height: 0; }

.app {
  position: relative;
  height: 100vh; overflow: hidden;
  display: flex; flex-direction: column;
}

/* small drop-down arrow */
.caret {
  display: inline-block; flex: none;
  border: 1px solid transparent;
  border-top: 2px solid #333; border-bottom: 0;
  margin: 0 1px;
}
.caret.right { border: 1px solid transparent; border-left: 2px solid #222; border-right: 0; }
.caret.up { border: 1px solid transparent; border-bottom: 2px solid #222; border-top: 0; }

/* Title bar */
.top {
  display: grid;
  grid-template-columns: 20px 1fr;
  grid-template-rows: 13px 9px;
}
.app-menu {
  grid-row: 1 / 3;
  margin: 1px 0 0 2px;
  background: linear-gradient(#d8d8d8, #8d8d8d);
  border-radius: 2px 2px 0 0;
}
.app-menu .logo { width: 14px; height: 14px; }
.app-menu .caret { margin: 0; }
.title-bar {
  display: flex; align-items: center;
  padding: 0 4px 0 3px;
  background: linear-gradient(#5e5e5e 0, #9b9b9b 2px, #8a8a8a 6px, #636363);
  color: #eee;
}
.quick { display: flex; gap: 3px; padding-left: 1px; }
.workspace {
  display: flex; align-items: center; gap: 1px;
  width: 81px; height: 9px; margin-left: 6px; padding: 0 1px;
  background: #f4f4f4; color: #333;
}
.workspace select { flex: 1; min-width: 0; }
.more { margin-left: 3px; }
.app-title {
  flex: 1;
  display: flex; gap: 6px; justify-content: center;
  font-size: 6px;
  white-space: nowrap;
}
.search {
  width: 81px; height: 9px; margin-left: 3px; padding: 0 2px;
  background: #fafafa; font-style: italic;
}
.search::placeholder { color: #888; }
.account { display: flex; gap: 3px; width: 60px; padding-left: 2px; }
.account button { gap: 2px; }
.services { display: flex; align-items: center; gap: 4px; padding-left: 3px; }
.help { display: flex; align-items: center; margin: 0 8px; }
.help-button {
  width: 8px; height: 8px; border-radius: 4px;
  background: #eef3fa; color: #2b4f93; font-weight: bold;
}
.window-buttons { display: flex; gap: 3px; }
.window-buttons svg { width: 5px; height: 5px; fill: none; stroke: #222; stroke-width: 2; }

/* Ribbon tabs */
.ribbon-tabs {
  display: flex; gap: 2px;
  padding-left: 3px;
  background: #35363a; color: #f0f0f0;
}
.ribbon-tabs a { padding: 1px 4px; }
.ribbon-tabs .active { background: #f6f6f6; color: #222; border-radius: 1px 1px 0 0; }
.ribbon-toggle { margin-left: 10px; }
.ribbon-toggle i { width: 6px; height: 4px; background: #e4e4e4; border-radius: 1px; }

/* Ribbon */
.ribbon {
  display: grid;
  grid-template-columns: 86fr 35fr 80fr 42fr 67fr 34fr 67fr 94fr 94fr 98fr 32fr 35fr;
  height: 45px;
  padding: 0 2px;
  background: #777;
}
.panel {
  display: flex; flex-direction: column;
  min-width: 0;
  padding: 2px 2px 0;
  background: #fdfdfd;
  border-right: 1px solid #d9d9d9;
}
.panel-name {
  position: relative;
  height: 8px;
  text-align: center;
}
.panel-name .caret { vertical-align: middle; }
.panel-name .launch { position: absolute; right: 0; top: 3px; }
.filler { background: linear-gradient(#fafafa, #a9a9a9); }
.tools { display: flex; justify-content: space-between; height: 35px; }
.big {
  flex: 1 1 auto; flex-direction: column; justify-content: flex-start;
  padding-top: 1px;
  white-space: nowrap;
}
.big svg { width: 15px; height: 15px; margin-bottom: 2px; }
.big .caret { margin-top: 2px; }
.stack { display: grid; grid-template-rows: repeat(3, 11px); white-space: nowrap; }
.stack.wide { height: 35px; }
.stack button { justify-content: flex-start; gap: 2px; }
.stack .on { background: #bfe4fb; outline: 1px solid #6bb6e8; }
.icons { display: grid; flex: 1; grid-auto-rows: 11px; }
.icons button { justify-content: flex-start; }
.cols-2 { flex: none; grid-template-columns: 13px 13px; padding-left: 1px; }
.cols-3 { grid-template-columns: 1fr 1fr 1fr; }
.cols-5 { grid-template-columns: repeat(5, 1fr); }
.coords { grid-template-columns: 19px repeat(4, 1fr); }
.coords .drop { grid-column: 2 / 6; }
.drop { display: flex; align-items: center; gap: 1px; }
.drop select { flex: 1; min-width: 0; }
.row { display: flex; justify-content: space-between; padding: 0 1px; }

/* File tabs */
.file-tabs {
  display: flex; align-items: flex-end; gap: 5px;
  height: 16px;
  padding: 0 0 3px 10px;
  background: linear-gradient(#bdbdbd, #a6a6a6 12px, #777 13px);
}
.file-tab {
  display: flex; justify-content: space-between; align-items: center;
  width: 57px; height: 10px; padding: 0 5px 0 7px;
  background: #f2f2f2; color: #222;
  border-radius: 4px 4px 0 0;
}
.file-tab span { color: #888; font-size: 7px; }
.new-tab { width: 11px; height: 7px; background: #888; border: 1px solid #666; border-radius: 2px; margin-bottom: 1px; }

/* Drawing area */
.viewport {
  position: relative;
  flex: 1; min-height: 0;
  margin: 0 3px;
  overflow: hidden;
  background: #040e1b;
}
.drawing { position: absolute; width: 100%; height: 100%; }
.view-label { position: absolute; left: 1px; top: 3px; color: #eee; }
.doc-buttons { position: absolute; right: 5px; top: 4px; gap: 4px; }
.doc-buttons svg { stroke: #ddd; }
.view-cube { position: absolute; right: 6px; top: 16px; width: 64px; height: 64px; }
.view-cube text {
  fill: #d5d8dc; text-anchor: middle;
  font: bold 10px 'Liberation Sans', sans-serif;
}
.view-cube .cube-face { font-size: 6px; fill: #46505c; }
.wcs {
  position: absolute; right: 27px; top: 89px;
  width: 22px; height: 8px;
  background: #c9ccda; color: #666; border-radius: 2px;
}
.nav-bar {
  position: absolute; right: 2px; top: 108px;
  display: flex; flex-direction: column; justify-content: space-between; align-items: center;
  width: 15px; height: 98px; padding: 8px 0;
  background: #59606b; border-radius: 2px;
}
.nav-bar button { flex-direction: column; gap: 3px; }
.nav-bar svg { width: 11px; height: 11px; fill: none; stroke: #39404a; }
.ucs-icon { position: absolute; left: 2px; bottom: 1px; width: 40px; height: 40px; fill: none; stroke: #a0a4a8; }

/* Palette */
.palette {
  position: absolute; left: 21px; top: 44px;
  display: flex;
  width: 181px; height: 143px;
  border: 2px solid #d6d6d6;
  font: 6px/9px 'Liberation Sans', sans-serif;
}
.palette-bar {
  display: flex; flex-direction: column; align-items: center; gap: 3px;
  width: 10px; padding: 1px 0;
  background: #fff; color: #222;
}
.palette-bar button svg { width: 6px; height: 6px; fill: none; stroke: #222; }
.palette-name { writing-mode: vertical-rl; transform: rotate(180deg); margin-top: auto; }
.palette-body {
  flex: 1;
  display: grid; grid-template-columns: 31px 1fr; gap: 4px 3px;
  align-content: start; align-items: center;
  padding: 2px 13px 0 1px;
  background: #6b6b6b; color: #f4f4f4;
  border: 1px solid #555;
}
.palette-body h1 { grid-column: 1 / 3; margin: 0 0 6px; font-size: 7px; line-height: 9px; }
.palette-body label { text-align: right; }
.palette-body button { grid-column: 2; width: 99px; height: 9px; background: #fff; color: #222; }
.combo { position: relative; height: 9px; background: #fff; color: #222; }
.combo select { display: block; width: 100%; height: 9px; padding: 0 2px; }
.combo::before {
  content: ''; position: absolute; right: 0; top: 0;
  width: 8px; height: 9px; border: 1px solid #aaa; background: #eee;
  pointer-events: none;
}
.combo::after {
  content: ''; position: absolute; right: 2px; top: 4px;
  border: 2px solid transparent; border-top-color: #111; border-bottom: 0;
  pointer-events: none;
}
.short { width: 35px; }
.full { width: 119px; }
.tiny { width: 22px; }
.medium { width: 43px; }
.palette input {
  width: 7px; height: 7px; background: #fff; color: #2a55b0;
  display: grid; place-items: center;
}
.palette input:checked::after { content: '✓'; font: bold 6px/7px 'DejaVu Sans', sans-serif; }

/* Command line */
.command {
  position: absolute; left: 153px; right: 153px; bottom: 0;
  display: flex; height: 37px;
  font: 5px/7px 'DejaVu Sans Mono', monospace;
}
.command-grip {
  display: flex; flex-direction: column; align-items: center; gap: 4px;
  width: 10px; padding-top: 7px;
  background: linear-gradient(#666b72, #2f3338);
}
.command-grip svg { width: 6px; height: 6px; fill: none; stroke: #ddd; }
.command-main { flex: 1; display: flex; flex-direction: column; background: #b3b4b7; color: #111; }
.history { flex: 1; padding: 5px 1px 0; }
.prompt {
  display: flex; align-items: center; gap: 2px;
  height: 9px; padding: 0 2px;
  background: #e9eaf0;
}
.prompt-icon { width: 7px; height: 6px; background: #a9b4c2; line-height: 6px; }
.prompt input { flex: 1; font-style: italic; }
.prompt input::placeholder { color: #777; }

/* Layout tabs */
.layout-tabs {
  display: flex; align-items: center; gap: 2px;
  height: 8px; margin: 0 3px;
  background: #fff; color: #333;
}
.layout-tabs button svg { width: 5px; height: 5px; fill: #555; }
.layout-tabs .active {
  padding: 0 4px; margin-left: 1px; margin-right: 2px;
  background: #0a1220; color: #fff;
  clip-path: polygon(0 0, 100% 0, 88% 100%, 12% 100%);
}

/* Status bar */
.status-bar {
  display: flex; align-items: center;
  height: 13px; padding: 0 2px;
  background: linear-gradient(#8b8b8b, #b0b0b0 2px, #8b8b8b 11px, #444 12px);
  font-family: 'Liberation Sans', sans-serif;
}
.position { width: 66px; padding-left: 5px; color: #222; white-space: nowrap; }
.toggles { display: flex; }
.toggles button { width: 10px; height: 10px; background: #cfcfcf; border-right: 1px solid #999; }
.toggles .on { background: #b5eaf5; }
.tray { display: flex; align-items: center; gap: 2px; margin-left: auto; color: #111; }
.tray button { height: 10px; background: #b5b5b5; }
.tray .model { padding: 0 1px; }
.tray .scale { padding: 0 1px; margin: 0 2px; }
.tray .gap { margin-left: 3px; }
.tray .lamp { width: 12px; margin-left: 3px; background: #e8e3a0; }
.grip { width: 6px; height: 6px; background: radial-gradient(circle, #ddd 1px, transparent 1px) 0 0 / 2px 2px; }

/* Overlay in the corner */
.watermark {
  position: absolute; right: 0; bottom: 0;
  width: 182px; height: 72px; padding: 13px 0 0 12px;
  background: linear-gradient(rgba(0,0,8,.4) 51px, rgba(0,0,8,.1) 52px);
  pointer-events: none;
}
.mark {
  font: bold 22px/28px 'DejaVu Sans', sans-serif;
  color: rgba(255,255,255,.32);
  white-space: nowrap;
}
.mark b { color: rgba(150,175,10,.4); }
.tagline { margin-top: 9px; font: italic bold 6px/9px 'Open Sans', sans-serif; color: rgba(255,255,255,.8); }
```
